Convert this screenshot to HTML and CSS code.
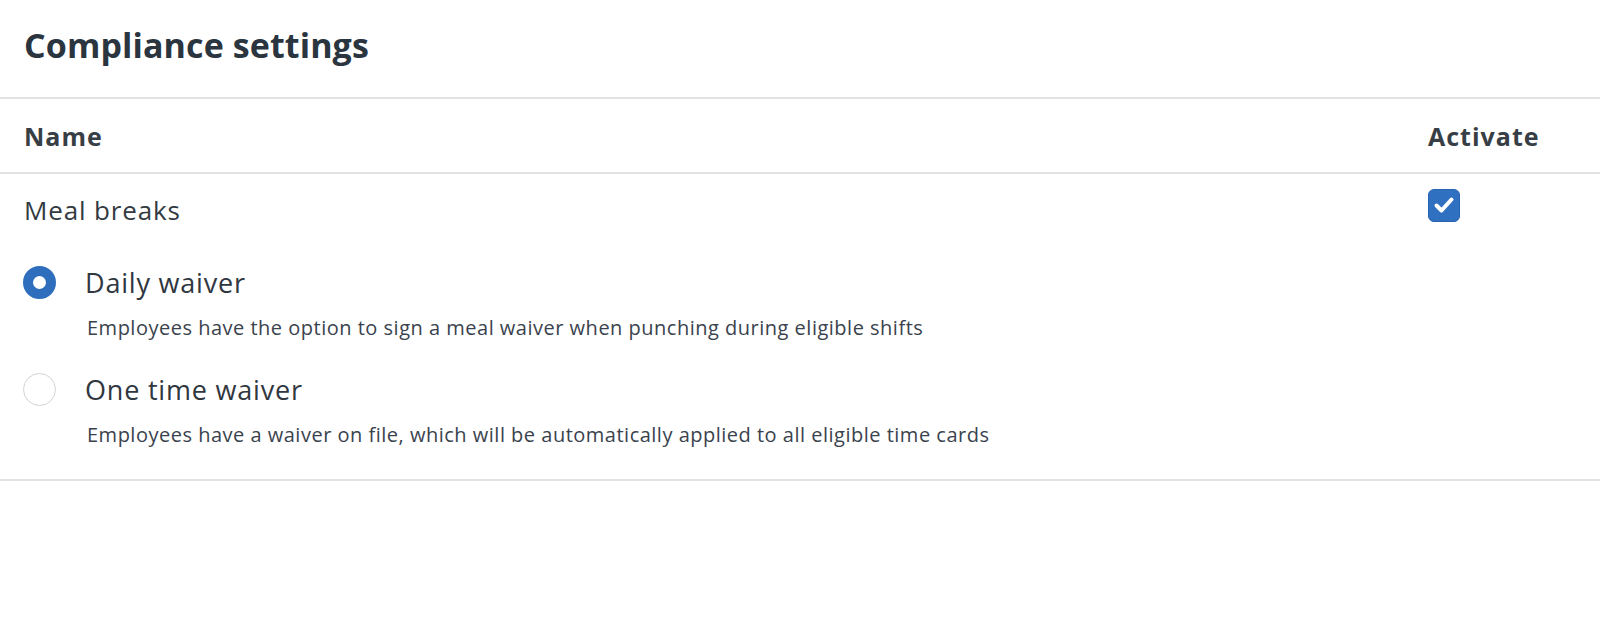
FILE: index.html
```html
<!DOCTYPE html>
<html lang="en">
<head>
<meta charset="utf-8">
<title>Compliance settings</title>
<link rel="stylesheet" href="styles.css">
</head>
<body>
<div class="page">
  <header class="page-header">
    <h1 class="title">Compliance settings</h1>
  </header>
  <div class="table-head">
    <div class="col-name">Name</div>
    <div class="col-activate">Activate</div>
  </div>
  <div class="table-row">
    <div class="col-name">
      <div class="row-name">Meal breaks</div>
      <div class="options">
        <div class="option">
          <div class="option-line">
            <span class="radio radio-on"></span>
            <span class="option-label">Daily waiver</span>
          </div>
          <div class="option-desc">Employees have the option to sign a meal waiver when punching during eligible shifts</div>
        </div>
        <div class="option">
          <div class="option-line">
            <span class="radio"></span>
            <span class="option-label">One time waiver</span>
          </div>
          <div class="option-desc">Employees have a waiver on file, which will be automatically applied to all eligible time cards</div>
        </div>
      </div>
    </div>
    <div class="col-activate">
      <span class="checkbox">
        <svg viewBox="0 0 32 32" width="32" height="32" aria-hidden="true">
          <path d="M8.5 16.5 L13.5 21.5 L23.5 10.5" fill="none" stroke="#fff" stroke-width="4" stroke-linecap="round" stroke-linejoin="round"/>
        </svg>
      </span>
    </div>
  </div>
</div>
</body>
</html>
```

FILE: styles.css
```css
* { box-sizing: border-box; }
html, body { margin: 0; padding: 0; background: #fff; }
body {
  font-family: "Open Sans", "Lato", "Noto Sans", sans-serif;
  color: #2f3740;
}
.page { width: 100%; }

.page-header {
  height: 99px;
  display: flex;
  align-items: center;
  padding: 0 24px 7px;
  border-bottom: 2px solid #e2e2e2;
}
.title {
  margin: 0;
  font-size: 34px;
  font-weight: 700;
  color: #2a3540;
  letter-spacing: 0.1px;
}

.table-head {
  height: 75px;
  display: flex;
  align-items: center;
  padding: 0 0 0 24px;
  border-bottom: 2px solid #e2e2e2;
  font-size: 25px;
  font-weight: 700;
  color: #383e45;
  letter-spacing: 1px;
}
.col-name { flex: 1; }
.col-activate { width: 172px; }

.table-row {
  display: flex;
  padding: 16px 0 28px 24px;
  border-bottom: 2px solid #e2e2e2;
}
.row-name {
  font-size: 26px;
  line-height: 40px;
  color: #333a42;
  letter-spacing: 0.85px;
}
.options { padding-top: 30px; }
.option { margin-bottom: 23px; }
.option:last-child { margin-bottom: 0; }
.option-line {
  display: flex;
  align-items: center;
  height: 44px;
  margin-left: -1px;
}
.radio {
  width: 33px;
  height: 33px;
  border-radius: 50%;
  border: 1.5px solid #d3d3d3;
  background: #fff;
  flex: none;
}
.radio-on {
  border: 10px solid #2f6dbd;
}
.option-label {
  margin-left: 29px;
  font-size: 27px;
  color: #30373f;
  letter-spacing: 0.8px;
}
.option-desc {
  margin-left: 63px;
  padding-top: 8px;
  font-size: 20px;
  line-height: 32px;
  color: #3a434d;
  letter-spacing: 0.5px;
}

.checkbox {
  display: block;
  width: 32px;
  height: 33px;
  margin-top: -1px;
  border-radius: 6px;
  background: #3070c0;
  border: 1px solid #2a64ae;
}
.checkbox svg { display: block; margin: -1px 0 0 -1px; }
```
